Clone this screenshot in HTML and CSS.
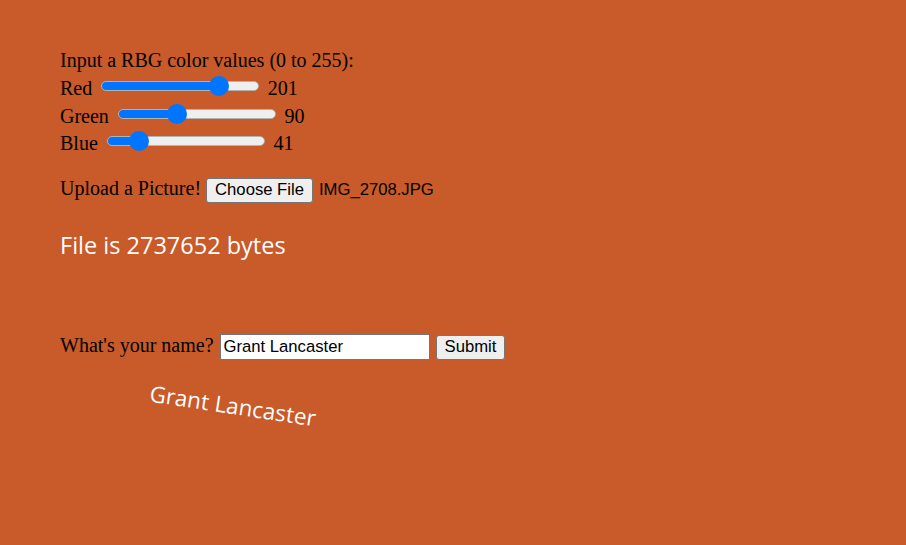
FILE: index.html
```html
<!DOCTYPE html>
<html>
<head>
<meta charset="utf-8">
<title>Color Picker</title>
<link rel="stylesheet" href="styles.css">
</head>
<body>
<div class="page">
  <div class="line">Input a RBG color values (0 to 255):</div>
  <div class="line">Red <input class="slider" type="range" min="0" max="255" value="201" style="--f:0.788"> 201</div>
  <div class="line green">Green <input class="slider" type="range" min="0" max="255" value="90" style="--f:0.353"> 90</div>
  <div class="line">Blue <input class="slider" type="range" min="0" max="255" value="41" style="--f:0.161"> 41</div>

  <div class="line upload">Upload a Picture! <span class="file"><button class="btn file-btn" type="button">Choose File</button><span class="file-name">IMG_2708.JPG</span></span></div>

  <div class="file-size">File is 2737652 bytes</div>

  <div class="line name-row">What's your name? <input class="text-input" type="text" value="Grant Lancaster"> <button class="btn submit" type="button">Submit</button></div>

  <div class="canvas"><span class="canvas-text">Grant Lancaster</span></div>
</div>
</body>
</html>
```

FILE: styles.css
```css
html, body {
  margin: 0;
  padding: 0;
  background: rgb(201, 90, 41);
  height: 100%;
}

.page {
  padding: 47px 0 0 60px;
  font-family: "Liberation Serif", "Times New Roman", serif;
  font-size: 20px;
  color: #000;
}

.line {
  line-height: 27.7px;
  white-space: nowrap;
}

.green {
  position: relative;
  top: 1px;
}

.slider {
  -webkit-appearance: none;
  appearance: none;
  width: 158px;
  height: 20px;
  margin: 0 3.8px;
  padding: 0;
  background: transparent;
  vertical-align: -1px;
}

.slider::-webkit-slider-runnable-track {
  height: 10px;
  box-sizing: border-box;
  border: 1px solid #b2b2b2;
  border-radius: 5px;
  background: linear-gradient(to right, #0075ff calc(10px + var(--f) * 138px), #efefef 0);
}

.slider::-webkit-slider-thumb {
  -webkit-appearance: none;
  appearance: none;
  width: 20px;
  height: 20px;
  margin-top: -6px;
  border: none;
  border-radius: 50%;
  background: #0075ff;
}

.upload {
  margin-top: 17.6px;
}

.btn {
  font-family: "Liberation Sans", Arial, sans-serif;
  font-size: 16.67px;
  color: #000;
  background: #efefef;
  border: 1px solid #767676;
  border-radius: 3px;
  height: 25px;
  box-sizing: border-box;
  padding: 0 8px;
  margin: 0;
  line-height: 18.6px;
}

.file-name {
  font-family: "Liberation Sans", Arial, sans-serif;
  font-size: 16.67px;
  margin-left: 6px;
}

.file-size {
  margin-top: 24.7px;
  font-family: "Open Sans", sans-serif;
  font-size: 23.5px;
  line-height: 32.7px;
  font-weight: 500;
  color: #fff;
}

.name-row {
  margin-top: 70.6px;
}

.text-input {
  width: 210px;
  height: 26px;
  box-sizing: border-box;
  margin: 0 0 0 1px;
  padding: 0 3px;
  border: 1px solid #767676;
  background: #fff;
  font-family: "Liberation Sans", Arial, sans-serif;
  font-size: 16.67px;
  color: #000;
}

.submit {
  margin-left: 1px;
}

.canvas {
  margin-top: 35.2px;
  padding-left: 89px;
  height: 120px;
}

.canvas-text {
  display: inline-block;
  font-family: "Open Sans", sans-serif;
  font-size: 22.5px;
  font-weight: 500;
  line-height: 22px;
  color: #fff;
  transform: rotate(8.6deg);
  transform-origin: center;
}
```
